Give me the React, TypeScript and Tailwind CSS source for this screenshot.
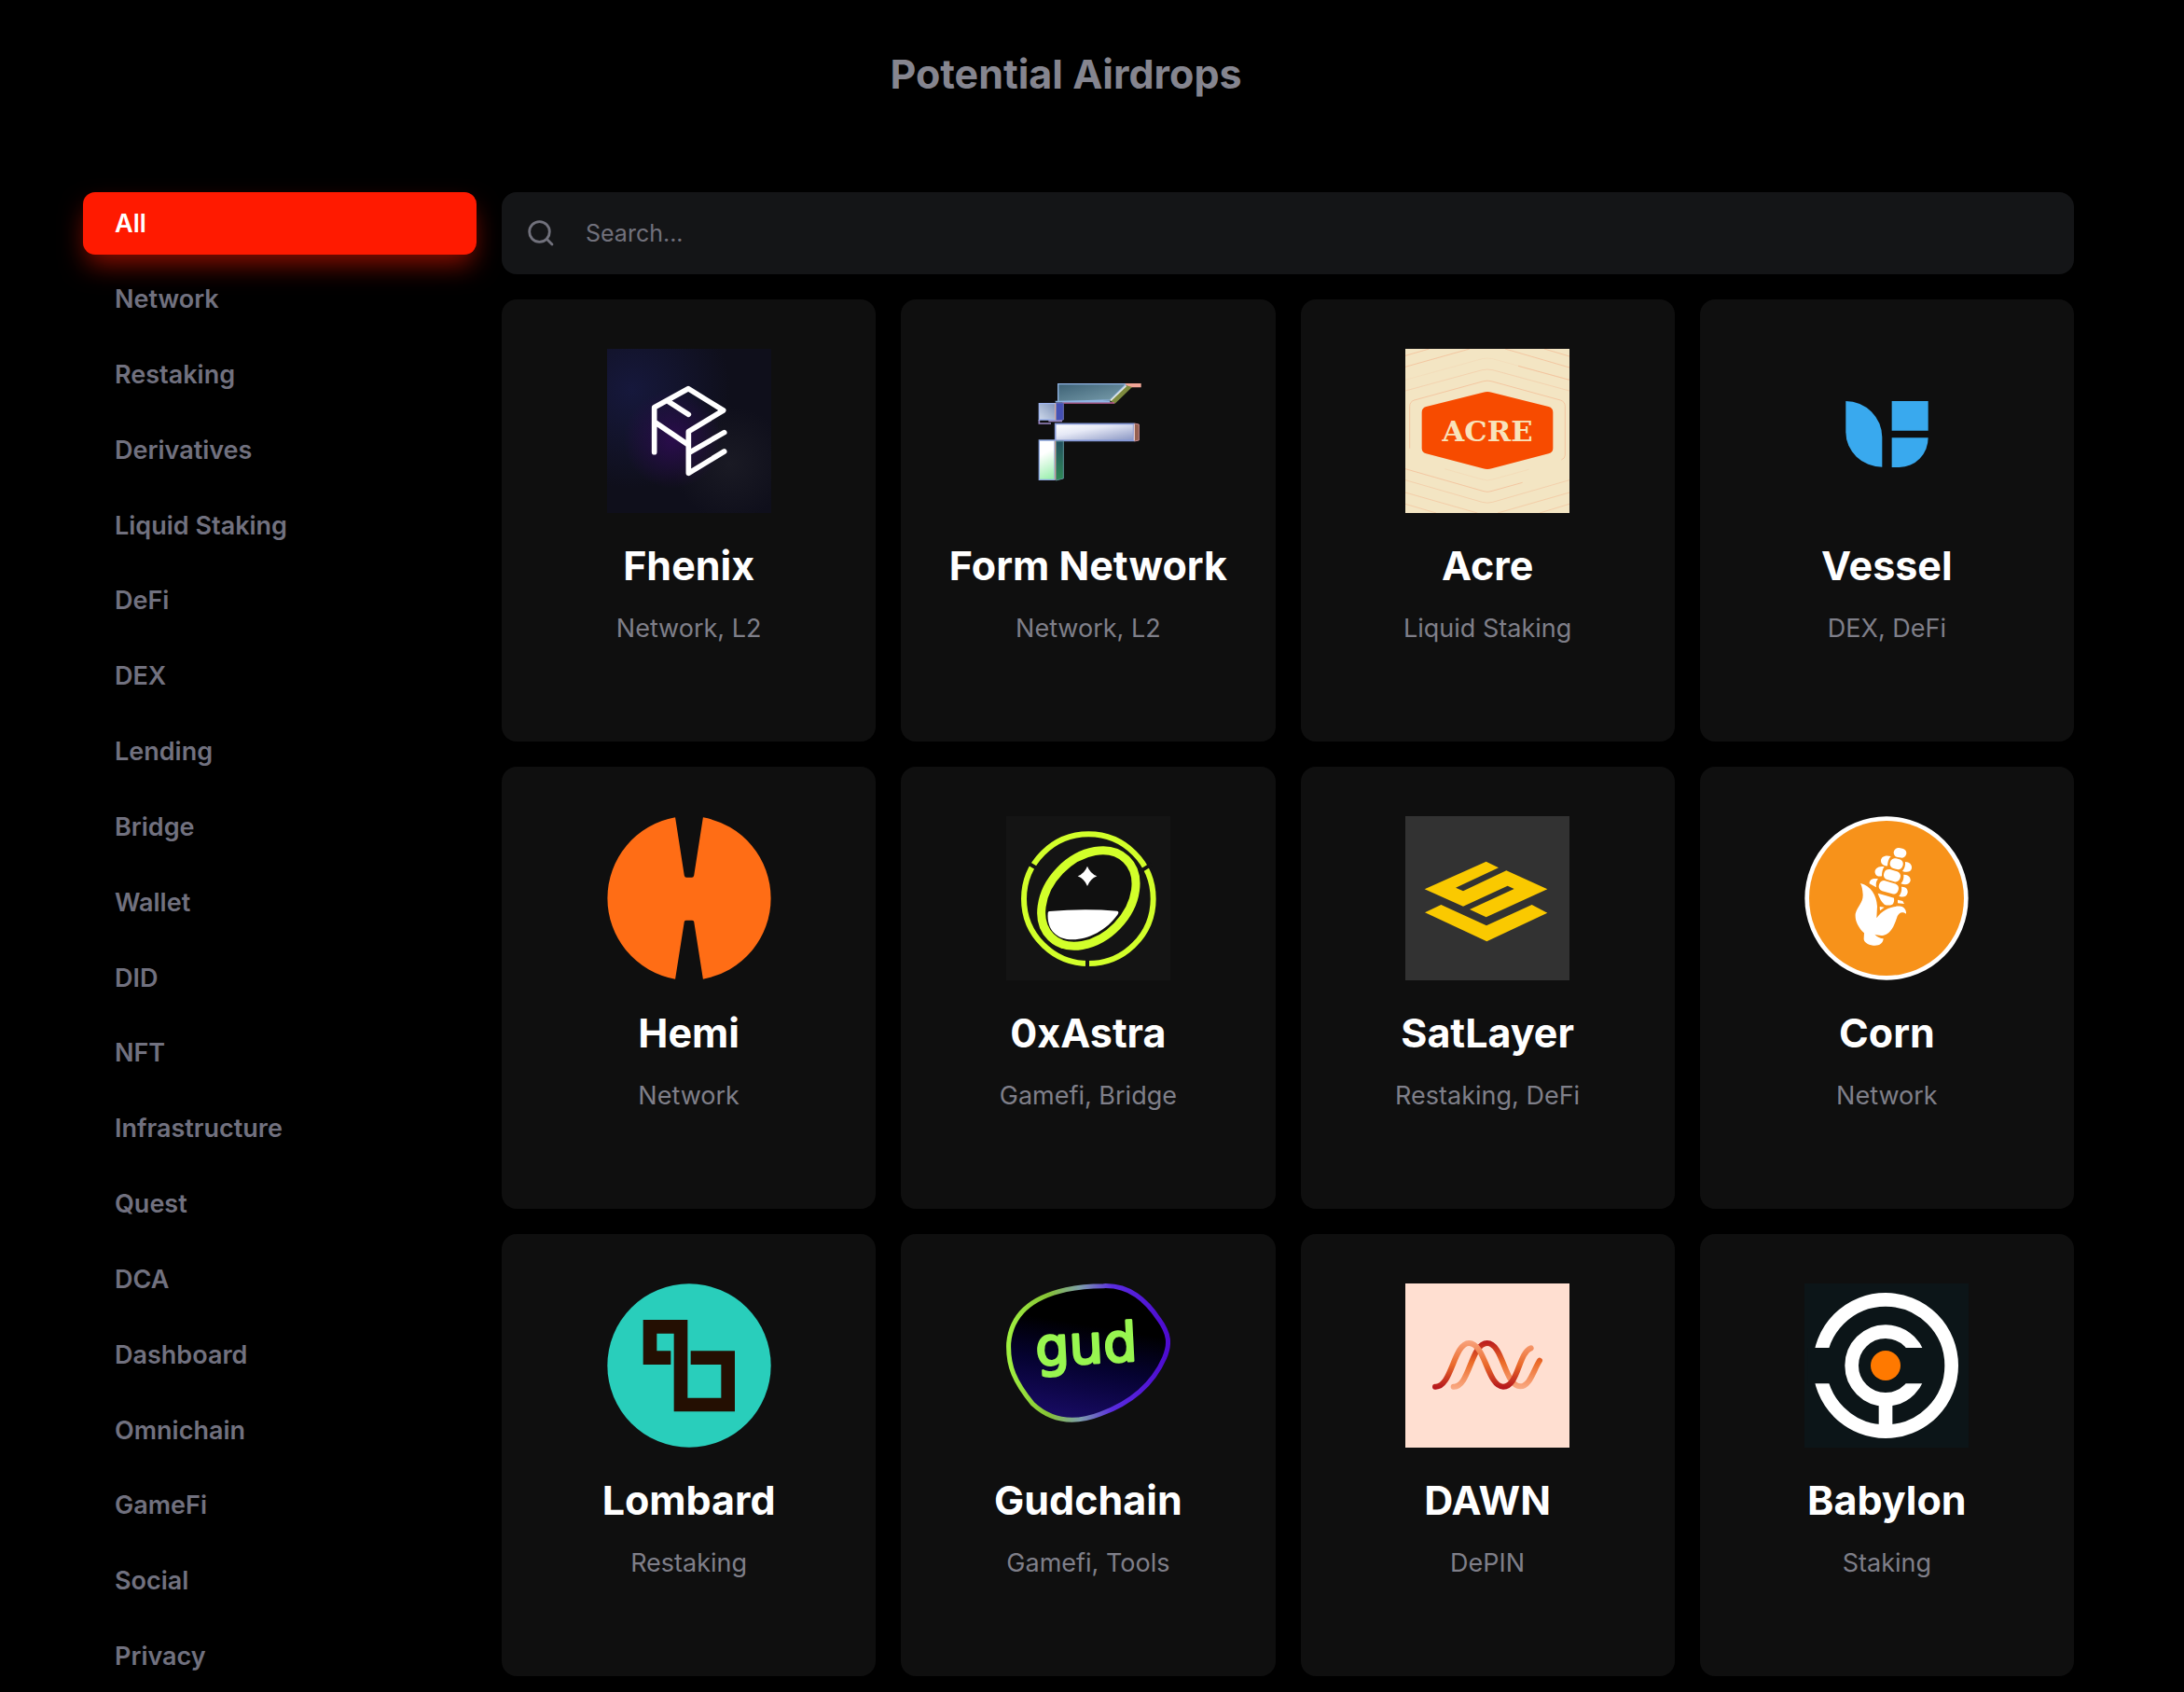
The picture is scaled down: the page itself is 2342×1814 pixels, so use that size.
import { useState, type ReactNode } from "react";

const CATEGORIES = [
  "All",
  "Network",
  "Restaking",
  "Derivatives",
  "Liquid Staking",
  "DeFi",
  "DEX",
  "Lending",
  "Bridge",
  "Wallet",
  "DID",
  "NFT",
  "Infrastructure",
  "Quest",
  "DCA",
  "Dashboard",
  "Omnichain",
  "GameFi",
  "Social",
  "Privacy",
];

function Logo({ viewBox, children }: { viewBox: string; children: ReactNode }) {
  return (
    <svg viewBox={viewBox} aria-hidden="true" className="size-44 shrink-0">
      {children}
    </svg>
  );
}

function FhenixLogo() {
  return (
    <Logo viewBox="30 30 528 528">
      <defs>
        <radialGradient id="fh-blue" cx="0.15" cy="0.25" r="0.6">
          <stop offset="0" stopColor="#16183c" />
          <stop offset="1" stopColor="#16183c" stopOpacity="0" />
        </radialGradient>
        <radialGradient id="fh-purple" cx="0.4" cy="0.55" r="0.3">
          <stop offset="0" stopColor="#2a0c4c" />
          <stop offset="1" stopColor="#2a0c4c" stopOpacity="0" />
        </radialGradient>
        <radialGradient id="fh-gray" cx="0.75" cy="0.7" r="0.35">
          <stop offset="0" stopColor="#1a1a24" />
          <stop offset="1" stopColor="#1a1a24" stopOpacity="0" />
        </radialGradient>
      </defs>
      <path fill="#0f0f1b" d="M30 30h528v528H30z" />
      <path fill="url(#fh-blue)" d="M30 30h528v528H30z" />
      <path fill="url(#fh-gray)" d="M30 30h528v528H30z" />
      <path fill="url(#fh-purple)" d="M30 30h528v528H30z" />
      <path
        fill="none"
        stroke="#fff"
        strokeWidth="17"
        strokeLinecap="round"
        strokeLinejoin="round"
        d="M182 362V218L291 158L404 228L292 296V430L407 360M294 364L407 299M228 200L292 241M184 266L290 338"
      />
    </Logo>
  );
}

function FormLogo() {
  return (
    <Logo viewBox="26 30 528 528">
      <defs>
        <linearGradient id="fm-top" x1="0" y1="0" x2="1" y2="1">
          <stop offset="0" stopColor="#3d6175" />
          <stop offset="1" stopColor="#7ba0ae" />
        </linearGradient>
        <linearGradient id="fm-cube" x1="1" y1="0" x2="0" y2="1">
          <stop offset="0" stopColor="#7f93b8" />
          <stop offset="1" stopColor="#cdd8ea" />
        </linearGradient>
        <linearGradient id="fm-mid" x1="0" y1="0" x2="0.9" y2="1">
          <stop offset="0" stopColor="#fff" />
          <stop offset="0.4" stopColor="#e6e9f6" />
          <stop offset="1" stopColor="#8f9bc6" />
        </linearGradient>
        <linearGradient id="fm-low" x1="0.4" y1="0" x2="0.6" y2="1">
          <stop offset="0.3" stopColor="#fff" />
          <stop offset="1" stopColor="#9df0b0" />
        </linearGradient>
        <linearGradient id="fm-side" x1="0" y1="0" x2="0" y2="1">
          <stop offset="0" stopColor="#245060" />
          <stop offset="1" stopColor="#2f8a55" />
        </linearGradient>
      </defs>
      <path fill="url(#fm-top)" stroke="#8fb4e4" strokeWidth="4" d="M193 143H412L360 195L193 200z" />
      <path fill="#f0a596" d="M408 141H460V154H418z" />
      <path fill="#7d8a3e" d="M414 148L431 153L376 206L358 196z" />
      <path fill="none" stroke="#dfe6e4" strokeWidth="5" d="M412 148L362 196" />
      <path fill="none" stroke="#c8669c" strokeWidth="5" d="M206 204H374" />
      <path fill="none" stroke="#8fb4e4" strokeWidth="5" d="M184 200H360" />
      <path fill="#4450b4" stroke="#6b6fae" strokeWidth="3" d="M186 204H210V258L186 262z" />
      <path fill="none" stroke="#9a88c4" strokeWidth="5" d="M132 258V270H170M162 262H206" />
      <path fill="url(#fm-cube)" stroke="#9db4ee" strokeWidth="4" d="M132 206H184V258H132z" />
      <path fill="none" stroke="#e0a890" strokeWidth="3" d="M184 206V258" />
      <path fill="#96604e" stroke="#c78a90" strokeWidth="3" d="M438 270L453 273V324L438 327z" />
      <path fill="url(#fm-mid)" stroke="#8497d6" strokeWidth="5" d="M184 271H436V325H184z" />
      <path fill="none" stroke="#e4c8c4" strokeWidth="4" d="M438 272V325" />
      <path fill="url(#fm-side)" stroke="#5c8f96" strokeWidth="3" d="M186 327H210V447L186 453z" />
      <path fill="url(#fm-low)" stroke="#8ca6e0" strokeWidth="4" d="M132 324H182V451H132z" />
      <path fill="none" stroke="#e0a890" strokeWidth="3" d="M184 326V451" />
    </Logo>
  );
}

function AcreLogo() {
  return (
    <Logo viewBox="33 30 528 528">
      <path fill="#f3e5c3" d="M33 30h528v528H33z" />
      <g fill="none" stroke="#f3b790" strokeWidth="2">
        <path d="M47 350V215Q47 200 62 195L285 134Q297 131 309 134L532 195Q547 200 547 215V372Q547 382 535 387" />
        <path d="M33 165L280 98Q297 94 314 98L561 165" opacity="0.6" />
        <path d="M396 85L561 130M33 88L240 30M354 30L561 90M33 52L110 30M480 30L561 54" />
        <path d="M33 130L280 62Q297 58 314 62L561 130" opacity="0.25" />
        <path d="M33 416L285 488Q297 492 309 488L410 460" />
        <path d="M33 452L280 523Q297 528 314 523L561 452" opacity="0.7" />
        <path d="M33 492L265 558M330 558L561 492M33 529L132 558M465 558L561 529" opacity="0.8" />
        <path d="M160 416L280 450Q297 456 314 450L430 418" opacity="0.3" />
      </g>
      <path
        fill="#f74b00"
        d="M283 170Q297 166 311 170L494 216Q508 220 508 234V350Q508 363 494 367L311 415Q297 419 283 415L100 367Q86 363 86 350V234Q86 220 100 216z"
      />
      <text
        x="297"
        y="326"
        textAnchor="middle"
        fill="#f8e3bb"
        className="font-['DejaVu_Serif',serif] text-[92px] font-bold"
      >
        ACRE
      </text>
    </Logo>
  );
}

function VesselLogo() {
  return (
    <Logo viewBox="43 30 528 528">
      <g fill="#39a9ee">
        <path d="M176 198A117 117 0 0 1 293 315V410A117 112 0 0 1 176 298z" />
        <path d="M324 198h117v95H324z" />
        <path d="M324 316H441A93 95 0 0 1 348 411H324z" />
      </g>
    </Logo>
  );
}

function HemiLogo() {
  return (
    <Logo viewBox="0 0 118 118">
      <path
        fill="#ff6d15"
        d="M49 0.9A59 59 0 0 0 49 117.1L55.500 76Q55.800 75 57 75H61Q62.200 75 62.500 76L69 117.100A59 59 0 0 0 69 0.900L62.500 42.500Q62.200 44 61 44H57Q55.800 44 55.500 42.500z"
      />
    </Logo>
  );
}

function AstraLogo() {
  return (
    <Logo viewBox="26 33 528 528">
      <path fill="#141414" d="M26 33h528v528H26z" />
      <circle cx="291" cy="299" r="208" fill="none" stroke="#d2ff2a" strokeWidth="18" />
      <path stroke="#141414" strokeWidth="12" d="M287 480V530M130 204L96 184M456 211L494 187" />
      <ellipse
        cx="291"
        cy="297"
        rx="174"
        ry="128"
        transform="rotate(-46 291 297)"
        fill="#101010"
        stroke="#d2ff2a"
        strokeWidth="27"
      />
      <path
        fill="#fff"
        d="M165 339Q275 329 383 338Q390 340 385 349C350 400 290 430 240 430C188 430 156 398 160 344Q160 340 165 339z"
      />
      <path fill="#fff" d="M287 194Q296 217 318 226Q296 235 287 258Q278 235 256 226Q278 217 287 194z" />
    </Logo>
  );
}

function SatLayerLogo() {
  return (
    <Logo viewBox="33 33 528 528">
      <path fill="#323232" d="M33 33h528v528H33z" />
      <path
        fill="#fac900"
        d="M95 268L293 179L333 199L195 263L219 274L358 208L490 268L293 358L240 333L383 267L362 257L219 323zM148 318L294 385L440 318L490 344L295 436L96 343z"
      />
    </Logo>
  );
}

function CornLogo() {
  return (
    <Logo viewBox="31 33 528 528">
      <circle cx="295" cy="297" r="263" fill="#fff" />
      <circle cx="295" cy="297" r="249" fill="#f7921a" />
      <g fill="#fff">
        <rect x="318" y="136" width="41" height="30" rx="15" transform="rotate(10 338 151)" />
        <rect x="306" y="170" width="42" height="33" rx="15" transform="rotate(14 327 187)" />
        <rect x="286" y="207" width="54" height="34" rx="15" transform="rotate(16 313 224)" />
        <rect x="270" y="245" width="64" height="34" rx="15" transform="rotate(16 302 262)" />
        <path d="M309 162C290 157 276 164 277 178C278 189 288 194 298 193C299 180 301 171 309 162z" />
        <path d="M288 196C269 192 256 202 258 215C260 226 270 228 280 226C280 213 282 204 288 196z" />
        <path d="M268 235C253 231 239 236 240 250L262 262C260 250 262 242 268 235z" />
        <path d="M355 180C369 180 378 190 376 201C373 213 361 215 346 210C353 202 356 192 355 180z" />
        <path d="M350 221C364 220 374 230 372 241C369 253 356 256 341 250C349 242 351 232 350 221z" />
        <path d="M343 260C356 259 365 268 363 279C360 292 349 296 335 290C342 281 345 271 343 260z" />
        <path d="M267 281Q297 289 319 296Q321 309 314 317Q300 322 288 317Q274 304 267 281z" />
        <path d="M331 302L347 306L352 315L331 313z" />
        <path d="M273 324L288 326L274 337z" />
        <path d="M211 249C244 257 263 287 265 323L263 361C281 334 312 321 341 323C354 325 359 337 358 347C344 338 335 344 330 355C320 383 311 410 286 416C275 418 264 415 257 413C265 422 275 426 285 427C284 444 270 451 252 449C233 446 221 437 222 426L223 409C203 390 193 369 195 347C202 321 220 312 219 285C218 270 216 258 211 249z" />
      </g>
    </Logo>
  );
}

function LombardLogo() {
  return (
    <Logo viewBox="31 33 528 528">
      <circle cx="295" cy="297" r="263" fill="#29cebb" />
      <path
        fill="none"
        stroke="#240f02"
        strokeWidth="44"
        d="M236 272H169V172H268V423H420V272H300"
      />
    </Logo>
  );
}

function GudchainLogo() {
  return (
    <Logo viewBox="27 33 528 528">
      <defs>
        <linearGradient id="gud-ring" x1="0" y1="0.5" x2="1" y2="0.5">
          <stop offset="0" stopColor="#a0f040" />
          <stop offset="0.25" stopColor="#86c236" />
          <stop offset="0.45" stopColor="#7d9dac" />
          <stop offset="0.65" stopColor="#5a2ce0" />
          <stop offset="1" stopColor="#4d0bd0" />
        </linearGradient>
        <linearGradient id="gud-fill" x1="0.6" y1="0" x2="0.4" y2="1">
          <stop offset="0.3" stopColor="#000" />
          <stop offset="0.6" stopColor="#050230" />
          <stop offset="1" stopColor="#180b64" />
        </linearGradient>
      </defs>
      <path
        fill="url(#gud-fill)"
        stroke="url(#gud-ring)"
        strokeWidth="15"
        d="M340 41C425 38 478 88 518 148C552 195 555 228 536 272C495 365 420 420 330 453C240 488 170 474 112 420C55 350 32 300 35 225C44 125 120 75 220 53C260 44 300 41 340 41z"
      />
      <text
        x="122"
        y="290"
        fill="#98f650"
        stroke="#98f650"
        strokeWidth="8"
        strokeLinejoin="round"
        transform="rotate(-3 280 260)"
        className="font-['DejaVu_Sans',sans-serif] text-[172px]"
      >
        gud
      </text>
    </Logo>
  );
}

function DawnLogo() {
  return (
    <Logo viewBox="33 33 528 528">
      <defs>
        <linearGradient id="dawn-front" gradientUnits="userSpaceOnUse" x1="0" y1="220" x2="0" y2="370">
          <stop offset="0" stopColor="#f8a078" />
          <stop offset="0.5" stopColor="#ea6a2a" />
          <stop offset="1" stopColor="#b5161c" />
        </linearGradient>
        <linearGradient id="dawn-back" gradientUnits="userSpaceOnUse" x1="0" y1="220" x2="0" y2="370">
          <stop offset="0" stopColor="#bb1d1d" />
          <stop offset="0.45" stopColor="#ec6c28" />
          <stop offset="1" stopColor="#f9a983" />
        </linearGradient>
      </defs>
      <path fill="#ffdfd1" d="M33 33h528v528H33z" />
      <g fill="none" strokeWidth="18" strokeLinecap="round">
        <path
          stroke="url(#dawn-back)"
          d="M188 365C239 369 244 225 296 225C348 225 352 364 403 364C434 364 445 312 465 281"
        />
        <path
          stroke="url(#dawn-front)"
          d="M129 365C182 369 188 225 238 225C290 225 297 365 348 365C396 365 397 256 437 241"
        />
      </g>
    </Logo>
  );
}

function BabylonLogo() {
  return (
    <Logo viewBox="30 33 528 528">
      <path fill="#0c1518" d="M30 33h528v528H30z" />
      <g fill="none" stroke="#fff" strokeWidth="44">
        <circle cx="291" cy="297" r="212" />
        <circle cx="291" cy="297" r="109" />
        <path d="M291 415V495" />
      </g>
      <path fill="#0c1518" d="M40 240h110v115H40zM340 240h90v115H340z" />
      <circle cx="291" cy="297" r="48" fill="#ff7900" />
    </Logo>
  );
}

const PROJECTS = [
  { name: "Fhenix", tags: "Network, L2", Icon: FhenixLogo },
  { name: "Form Network", tags: "Network, L2", Icon: FormLogo },
  { name: "Acre", tags: "Liquid Staking", Icon: AcreLogo },
  { name: "Vessel", tags: "DEX, DeFi", Icon: VesselLogo },
  { name: "Hemi", tags: "Network", Icon: HemiLogo },
  { name: "0xAstra", tags: "Gamefi, Bridge", Icon: AstraLogo },
  { name: "SatLayer", tags: "Restaking, DeFi", Icon: SatLayerLogo },
  { name: "Corn", tags: "Network", Icon: CornLogo },
  { name: "Lombard", tags: "Restaking", Icon: LombardLogo },
  { name: "Gudchain", tags: "Gamefi, Tools", Icon: GudchainLogo },
  { name: "DAWN", tags: "DePIN", Icon: DawnLogo },
  { name: "Babylon", tags: "Staking", Icon: BabylonLogo },
];

export default function App() {
  const [category, setCategory] = useState("All");
  const [query, setQuery] = useState("");

  const visible = PROJECTS.filter(
    (p) =>
      (category === "All" || p.tags.toLowerCase().includes(category.toLowerCase())) &&
      p.name.toLowerCase().includes(query.toLowerCase()),
  );

  return (
    <div className="min-h-screen bg-black font-[Inter,sans-serif]">
      <header className="pt-[47px] pr-14 pb-[95px]">
        <h1 className="text-center text-[43px] leading-16 font-bold text-[#85858f]">
          Potential Airdrops
        </h1>
      </header>

      <main className="flex gap-[27px] pr-[118px] pb-1.5 pl-[89px]">
        <nav aria-label="Categories" className="flex w-[422px] shrink-0 flex-col justify-between gap-3">
          {CATEGORIES.map((c) => (
            <button
              key={c}
              type="button"
              onClick={() => setCategory(c)}
              className={`h-[67px] rounded-[13px] px-[34px] pt-0.5 text-left text-[27px] font-semibold ${
                c === category
                  ? "bg-[#ff1a00] text-white shadow-[0_14px_28px_-4px_rgba(255,26,0,0.55)]"
                  : "text-[#71717f] hover:text-white"
              }`}
            >
              {c}
            </button>
          ))}
        </nav>

        <section className="flex min-w-0 flex-1 flex-col gap-[27px] pb-3">
          <label className="flex h-[88px] items-center gap-[34px] rounded-2xl bg-[#141517] px-7">
            <svg
              viewBox="0 0 28 28"
              fill="none"
              stroke="#71717c"
              strokeWidth="2.8"
              strokeLinecap="round"
              aria-hidden="true"
              className="size-7 shrink-0"
            >
              <circle cx="12.500" cy="12.500" r="10.800" />
              <path d="M20.300 20.300L26 26" />
            </svg>
            <input
              type="text"
              aria-label="Search"
              placeholder="Search..."
              value={query}
              onChange={(e) => setQuery(e.target.value)}
              className="min-w-0 flex-1 bg-transparent pt-0.5 text-[25px] text-white outline-none placeholder:text-[#71717c]"
            />
          </label>

          <ul className="grid grid-cols-4 gap-[27px]">
            {visible.map(({ name, tags, Icon }) => (
              <li key={name}>
                <a
                  href="#"
                  className="flex flex-col items-center rounded-2xl bg-[#0f0f0f] pt-[53px] pb-[102px]"
                >
                  <Icon />
                  <h2 className="mt-[26px] text-[43px] leading-[61px] font-bold text-white">
                    {name}
                  </h2>
                  <p className="mt-[18px] text-[27px] leading-[38px] text-[#7f7f89]">{tags}</p>
                </a>
              </li>
            ))}
          </ul>
        </section>
      </main>
    </div>
  );
}
